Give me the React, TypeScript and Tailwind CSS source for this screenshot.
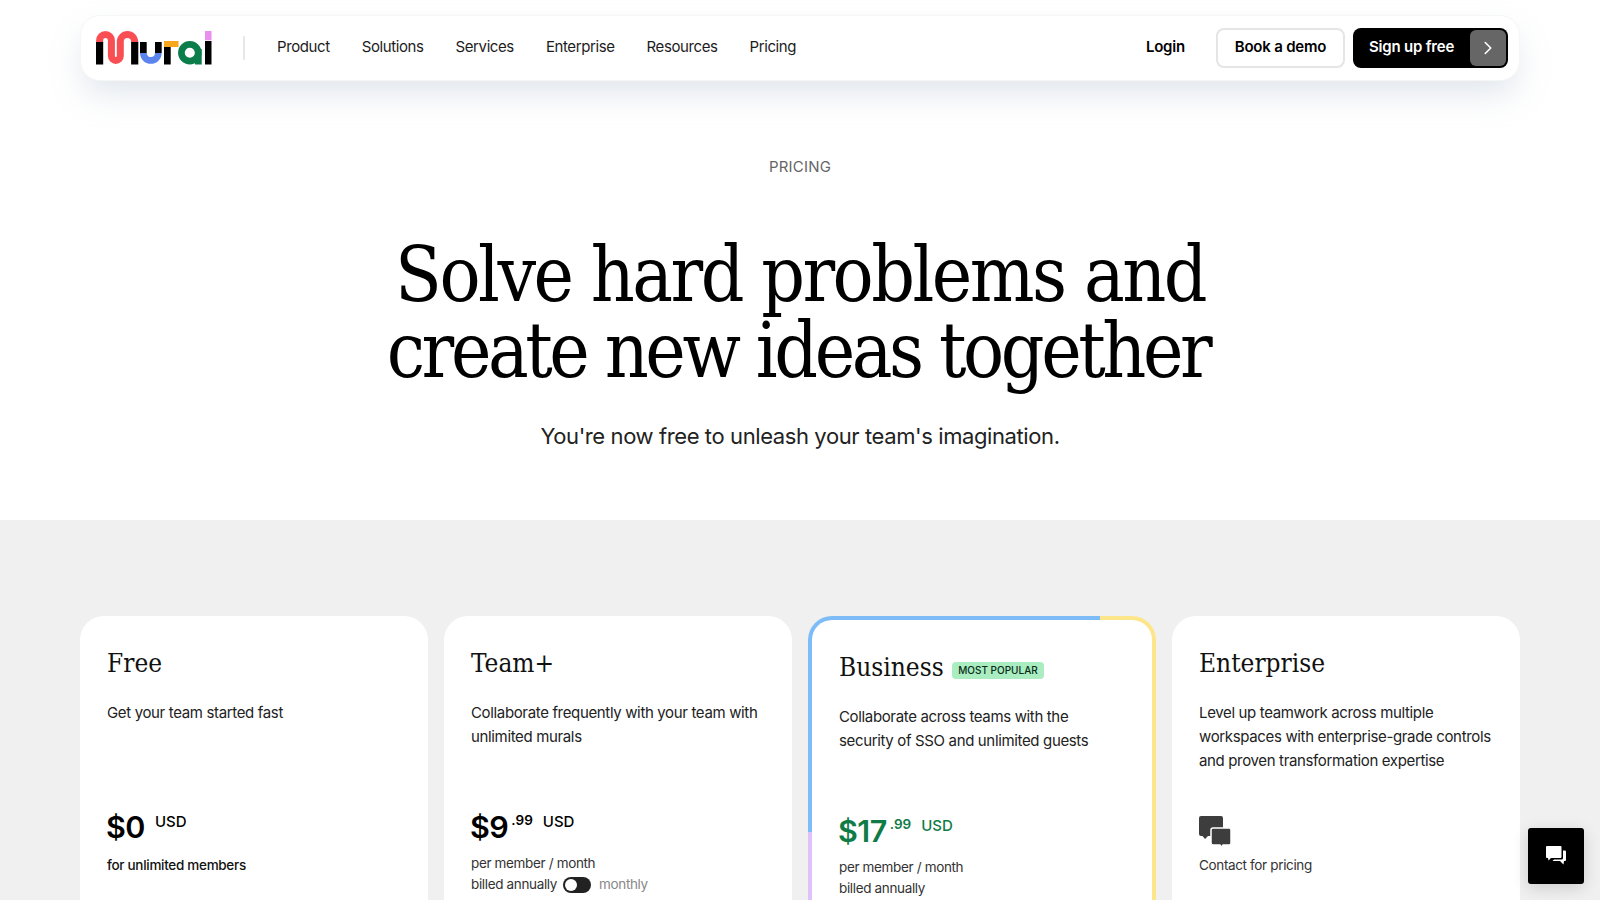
import { ChevronRight } from "lucide-react";

const sans = "font-['Inter','Liberation_Sans',sans-serif]";
const serif = "font-['DejaVu_Serif_Condensed','DejaVu_Serif',serif]";

function Logo() {
  return (
    <svg width="116" height="34" viewBox="0 0 116 34" fill="none" className="block">
      <path d="M3.600 12V9.500a5.900 5.900 0 0 1 11.800 0V25a4.450 4.450 0 0 0 8.900 0V10.700a7.200 7.200 0 0 1 14.400 0V12" stroke="#f94f54" strokeWidth="7" />
      <rect x="0" y="11" width="7.200" height="22.500" fill="#000" />
      <rect x="35.100" y="11" width="7.200" height="22.500" fill="#000" />
      <rect x="44" y="11" width="6.700" height="11" fill="#000" />
      <rect x="59" y="11" width="6.700" height="11" fill="#000" />
      <path d="M47.400 22a7.450 7.450 0 0 0 14.900 0" stroke="#5b84ef" strokeWidth="6.700" />
      <rect x="68" y="16" width="6.700" height="17.500" fill="#000" />
      <rect x="68" y="10" width="14.500" height="6" fill="#f6a71c" />
      <circle cx="93.800" cy="21.700" r="8.400" stroke="#0b7d4a" strokeWidth="6.700" />
      <rect x="99" y="18" width="6.700" height="15.500" fill="#0b7d4a" />
      <rect x="109" y="0" width="6.500" height="9.300" fill="#e98ff0" />
      <rect x="109" y="10" width="6.500" height="23.500" fill="#000" />
    </svg>
  );
}

function ChatsIcon() {
  return (
    <svg width="33" height="33" viewBox="0 0 33 33" fill="#3d3d3d" className="block">
      <path d="M2 0h20a2 2 0 0 1 2 2v16a2 2 0 0 1-2 2H9l-3 3-2.500-3H2a2 2 0 0 1-2-2V2a2 2 0 0 1 2-2z" />
      <path d="M14 12h16a2 2 0 0 1 2 2v13a2 2 0 0 1-2 2h-6l-1.500 2.500L21 29h-7a2 2 0 0 1-2-2V14a2 2 0 0 1 2-2z" stroke="#fff" strokeWidth="1.500" />
    </svg>
  );
}

function ChatWhite() {
  return (
    <svg width="20" height="20" viewBox="0 0 20 20" fill="#fff" className="block">
      <path d="M1 0h13.500a1 1 0 0 1 1 1v10a1 1 0 0 1-1 1H5l-2.500 2.500L2 12H1a1 1 0 0 1-1-1V1a1 1 0 0 1 1-1z" />
      <path d="M17 4.500h2a1 1 0 0 1 1 1V14a1 1 0 0 1-1 1h-1l-.5 3.500L14 15H6.500L8 13.500h7.500A1.500 1.500 0 0 0 17 12z" />
    </svg>
  );
}

function Price({ main, cents, green }: { main: string; cents?: string; green?: boolean }) {
  const color = green ? "text-[#0f7b46]" : "text-black";
  return (
    <div className={`flex items-start h-[42px] ${color}`}>
      <span className="text-[30.500px] leading-[42px] font-semibold tracking-[-0.5px] -ml-[1px]">{main}</span>
      {cents && <span className="text-[13.500px] leading-[18px] font-semibold ml-[3px] mt-[5px]">{cents}</span>}
      <span className="text-[15px] leading-[20px] font-medium ml-[10px] mt-[6px]">USD</span>
    </div>
  );
}

function Card({ title, desc, children }: { title: React.ReactNode; desc: React.ReactNode; children: React.ReactNode }) {
  return (
    <>
      <div className={`${serif} mt-[2px] text-[26px] leading-[36px] text-[#111] flex items-center`}>{title}</div>
      <p className="mt-[20px] h-[105px] text-[15px] leading-[24px] tracking-[-0.35px] text-[#222]">{desc}</p>
      {children}
    </>
  );
}

const sub = "text-[13.500px] leading-[21px] tracking-[-0.35px] text-[#333]";

export default function App() {
  return (
    <div className={`${sans} h-screen overflow-hidden bg-white relative`}>
      <div className="px-[80px] pt-[15px]">
        <header className="h-[66px] rounded-[20px] bg-white border border-[#f6f6f6] shadow-[0_16px_32px_-4px_rgba(180,192,210,0.42)] flex items-center pl-[15px] pr-[11px]">
          <Logo />
          <div className="w-[2px] h-[24px] bg-[#e8e8e8] ml-[31px] mr-[32px]" />
          <nav className="flex gap-[32px] pb-[2px] text-[15px] tracking-[-0.4px] text-[#1c1c1c]">
            {["Product", "Solutions", "Services", "Enterprise", "Resources", "Pricing"].map((n) => (
              <span key={n}>{n}</span>
            ))}
          </nav>
          <div className="ml-auto flex items-center text-[15px] tracking-[-0.2px] font-medium">
            <span className="text-black mr-[31px] pb-[2px] font-semibold">Login</span>
            <span className="h-[40px] w-[129px] border-2 border-[#e4e6e6] rounded-[8px] flex items-center justify-center pb-[2px] text-black font-semibold mr-[8px]">Book a demo</span>
            <span className="h-[40px] w-[155px] bg-black rounded-[8px] text-white font-semibold flex items-center justify-between pl-[16px] pr-[2px]">
              <span className="pb-[2px]">Sign up free</span>
              <span className="w-[36px] h-[36px] rounded-[6px] bg-[#666] flex items-center justify-center">
                <ChevronRight size={22} strokeWidth={1.75} color="#fff" />
              </span>
            </span>
          </div>
        </header>
      </div>

      <section className="h-[439px] flex flex-col items-center text-center">
        <p className="mt-[76px] text-[15px] leading-[20px] tracking-[0.2px] text-[#666]">PRICING</p>
        <h1 className={`${serif} mt-[60px] text-[76px] leading-[76px] text-black font-normal`}>
          <span className="block tracking-[-2.500px]">Solve hard problems and</span>
          <span className="block tracking-[-3.400px] pr-[4px]">create new ideas together</span>
        </h1>
        <p className="mt-[31px] text-[22px] leading-[32px] tracking-[-0.4px] text-[#222]">You're now free to unleash your team's imagination.</p>
      </section>

      <section className="bg-[#f0f0f0] px-[80px] pt-[96px] h-[500px]">
        <div className="grid grid-cols-4 gap-[16px]">
          <div className="bg-white rounded-[24px] px-[27px] pt-[27px] h-[600px]">
            <Card title="Free" desc="Get your team started fast">
              <Price main="$0" />
              <p className="mt-[7px] text-[13.500px] leading-[21px] tracking-[-0.3px] font-medium text-[#111]">for unlimited members</p>
            </Card>
          </div>
          <div className="bg-white rounded-[24px] px-[27px] pt-[27px] h-[600px]">
            <Card title="Team+" desc="Collaborate frequently with your team with unlimited murals">
              <Price main="$9" cents=".99" />
              <p className={`mt-[5px] ${sub}`}>per member / month</p>
              <div className={`${sub} flex items-center`}>
                billed annually
                <span className="w-[28px] h-[16px] rounded-full bg-[#222] ml-[6px] mr-[8px] flex items-center pl-[2px]">
                  <span className="w-[12px] h-[12px] rounded-full bg-white" />
                </span>
                <span className="text-[#888]">monthly</span>
              </div>
            </Card>
          </div>
          <div className="rounded-[24px] p-[4px] h-[600px] bg-[conic-gradient(at_292px_216px,#fde68a_0deg_180deg,#e0c2fb_180deg_270deg,#7dbcf6_270deg_360deg)]">
            <div className="bg-white rounded-[20px] h-full px-[27px] pt-[27px]">
              <Card
                title={
                  <>
                    Business
                    <span className={`${sans} ml-[8px] mt-[6px] h-[17px] px-[6.500px] rounded-[4px] bg-[#a9edc0] text-[10px] leading-[17px] font-medium text-[#0a2b18]`}>MOST POPULAR</span>
                  </>
                }
                desc={
                  <>
                    Collaborate across teams with the
                    <br />
                    security of SSO and unlimited guests
                  </>
                }
              >
                <Price main="$17" cents=".99" green />
                <p className={`mt-[5px] ${sub}`}>per member / month</p>
                <p className={sub}>billed annually</p>
              </Card>
            </div>
          </div>
          <div className="bg-white rounded-[24px] px-[27px] pt-[27px] h-[600px]">
            <Card title="Enterprise" desc="Level up teamwork across multiple workspaces with enterprise-grade controls and proven transformation expertise">
              <div className="h-[32px] mt-[10px]">
                <ChatsIcon />
              </div>
              <p className={`mt-[7px] ${sub}`}>Contact for pricing</p>
            </Card>
          </div>
        </div>
      </section>

      <div className="fixed left-[1528px] top-[828px] w-[56px] h-[56px] bg-black rounded-[3px] shadow-[0_4px_16px_rgba(0,0,0,0.15)] flex items-center justify-center">
        <ChatWhite />
      </div>
    </div>
  );
}
